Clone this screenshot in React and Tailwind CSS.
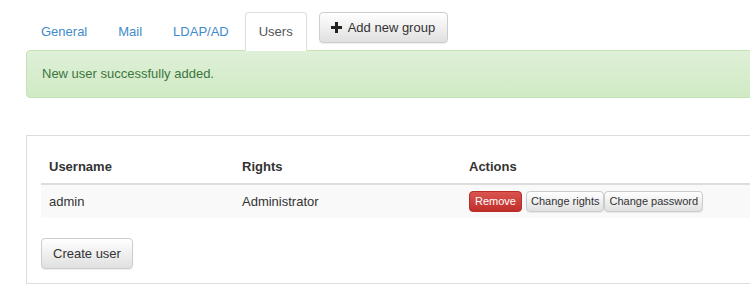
import React, { useState } from "react";

const tabs = ["General", "Mail", "LDAP/AD", "Users"];

const users = [{ name: "admin", rights: "Administrator" }];

// bootstrap-theme style gradient buttons
const btnDefault =
  "bg-gradient-to-b from-white to-[#e0e0e0] border border-[#ccc] text-[#333] shadow-[inset_0_1px_0_rgba(255,255,255,0.15),0_1px_1px_rgba(0,0,0,0.075)]";

const App = () => {
  const [activeTab, setActiveTab] = useState("Users");

  return (
    <div
      className="w-[750px] h-[307px] overflow-hidden bg-white text-[13px] text-[#333]"
      style={{ fontFamily: '"Liberation Sans", Arial, sans-serif' }}
    >
      <div className="w-[1000px] ml-[26px] pt-[12px]">
        {/* Tabs */}
        <div className="flex items-start">
          <ul className="flex">
            {tabs.map((tab) => (
              <li key={tab} className="mr-[2px] -mb-px">
                <button
                  onClick={() => setActiveTab(tab)}
                  className={
                    activeTab === tab
                      ? "block h-[39px] px-[13px] border border-[#ddd] border-b-white bg-white text-[#555] rounded-t"
                      : "block h-[39px] pl-[14px] pr-[13px] border border-transparent text-[#428bca]"
                  }
                >
                  {tab}
                </button>
              </li>
            ))}
          </ul>
          <button
            className={`${btnDefault} ml-[10px] h-[31px] pl-[11px] pr-[12px] rounded flex items-center gap-[6px] text-[13px]`}
          >
            <svg width="11" height="11" viewBox="0 0 11 11">
              <path d="M4 0h3v4h4v3H7v4H4V7H0V4h4z" fill="#222" />
            </svg>
            Add new group
          </button>
        </div>

        {/* Alert */}
        <div className="h-[48px] flex items-center px-[15px] border border-[#c5e3b5] bg-gradient-to-b from-[#dff0d8] to-[#d0eac4] text-[#3c763d] rounded-sm">
          New user successfully added.
        </div>

        {/* Panel */}
        <div className="mt-[37px] border border-[#ddd] pt-[14px] px-[14px] pb-[14px]">
          <table className="w-[974px] border-collapse text-left">
            <thead>
              <tr className="h-[34px] border-b-2 border-[#ddd]">
                <th className="w-[193px] px-[8px] font-bold">Username</th>
                <th className="w-[227px] px-[8px] font-bold">Rights</th>
                <th className="px-[8px] font-bold">Actions</th>
              </tr>
            </thead>
            <tbody>
              {users.map((u) => (
                <tr key={u.name} className="h-[34px] bg-[#f9f9f9]">
                  <td className="px-[8px]">{u.name}</td>
                  <td className="px-[8px]">{u.rights}</td>
                  <td className="px-[8px]">
                    <div className="flex items-center text-[11px]">
                      <button className="h-[21px] px-[5px] rounded-sm border border-[#b92c28] bg-gradient-to-b from-[#d9534f] to-[#c12e2a] text-white">
                        Remove
                      </button>
                      <button className={`${btnDefault} ml-[4px] h-[21px] px-[4px] rounded-sm`}>
                        Change rights
                      </button>
                      <button className={`${btnDefault} h-[21px] px-[4px] rounded-sm`}>
                        Change password
                      </button>
                    </div>
                  </td>
                </tr>
              ))}
            </tbody>
          </table>

          <button className={`${btnDefault} mt-[20px] h-[31px] px-[11px] rounded`}>
            Create user
          </button>
        </div>
      </div>
    </div>
  );
};

export default App;
